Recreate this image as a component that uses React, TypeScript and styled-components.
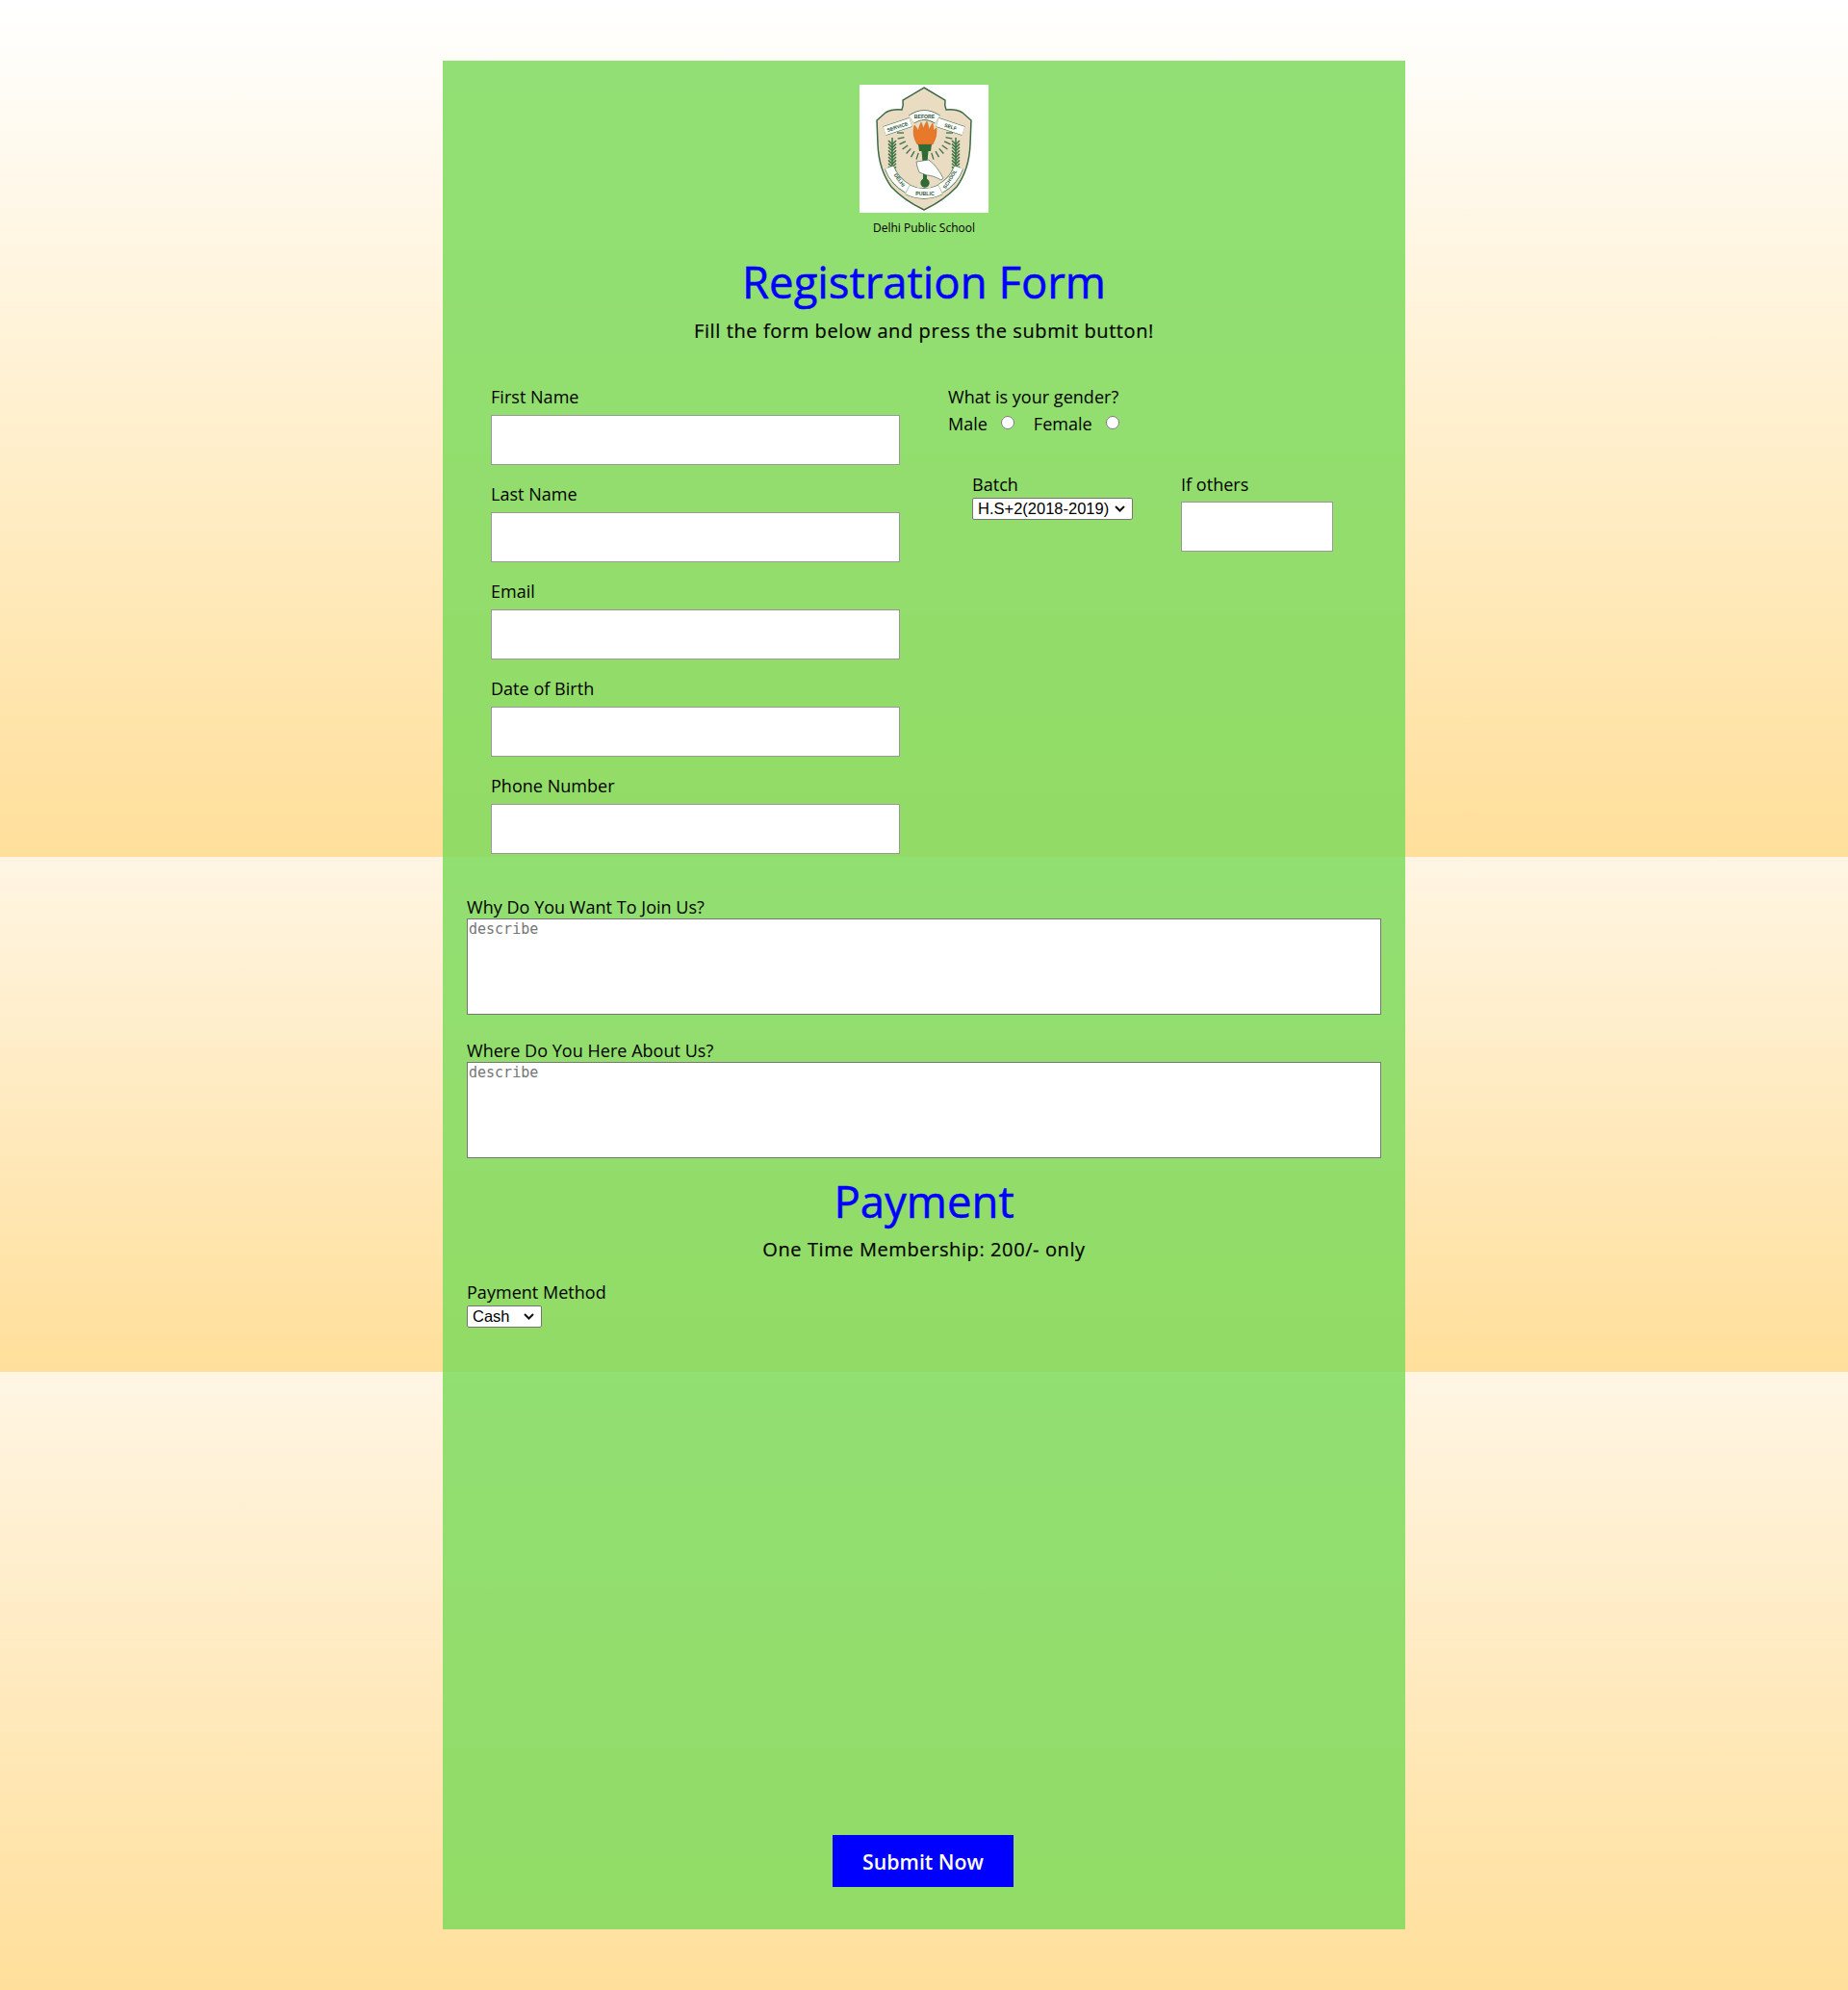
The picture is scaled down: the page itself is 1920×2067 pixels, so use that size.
import React from 'react';
import styled, { createGlobalStyle } from 'styled-components';

const GlobalStyle = createGlobalStyle`
  html, body {
    margin: 0;
    padding: 0;
  }

  body {
    color: #000;
    font-family: 'Open Sans', 'Liberation Sans', sans-serif;
  }

  * {
    box-sizing: border-box;
  }
`;

const Band = styled.section<{ $top?: number; $bottom?: number; $from: string }>`
  background: linear-gradient(to bottom, ${(props) => props.$from} 0%, #ffdf9a 100%);
  padding: ${(props) => props.$top || 0}px 0 ${(props) => props.$bottom || 0}px;
`;

const CardSlice = styled.div<{ $height: number }>`
  background-color: rgba(125, 218, 92, 0.84);
  height: ${(props) => props.$height}px;
  margin: 0 auto;
  width: 1000px;
`;

const Header = styled.header`
  align-items: center;
  display: flex;
  flex-direction: column;
  padding-top: 25px;
`;

const LogoBox = styled.svg`
  display: block;
  height: 133px;
  width: 134px;
`;

const Caption = styled.div`
  font-size: 12px;
  line-height: 16px;
  margin-top: 8px;
`;

const Title = styled.h1<{ $top: number }>`
  color: #0000ff;
  font-size: 45.5px;
  font-weight: 500;
  line-height: 54px;
  margin: ${(props) => props.$top}px 0 0;
  padding-bottom: 1px;
  text-align: center;
  -webkit-text-stroke: 0.5px #0000ff;
`;

const Subtitle = styled.p<{ $top: number }>`
  font-size: 20px;
  font-weight: 500;
  letter-spacing: 0.6px;
  line-height: 28px;
  margin: ${(props) => props.$top}px 0 0;
  text-align: center;
  -webkit-text-stroke: 0.2px #000;
`;

const Columns = styled.div`
  column-gap: 50px;
  display: grid;
  grid-template-columns: 425px 1fr;
  margin-top: 42px;
  padding-left: 50px;
`;

const Label = styled.label`
  display: block;
  font-size: 18px;
  letter-spacing: 0.03px;
  line-height: 24px;
`;

const Field = styled.div`
  margin-bottom: 18px;
`;

const TextInput = styled.input`
  background: #fff;
  border: 1px solid #999;
  display: block;
  height: 52px;
  margin-top: 7px;
  width: 100%;
`;

const RadioRow = styled.div`
  align-items: center;
  display: flex;
  font-size: 18px;
  line-height: 24px;
  margin-top: 4px;
`;

const RadioOption = styled.label`
  align-items: center;
  display: flex;
  margin-right: 20px;
`;

const Radio = styled.input`
  height: 14px;
  margin: 0 0 2px 14px;
  width: 14px;
`;

const BatchRow = styled.div`
  display: grid;
  grid-template-columns: 217px 158px;
  margin-top: 39px;
  padding-left: 25px;
`;

const CHEVRON =
  "url(\"data:image/svg+xml,%3Csvg xmlns='http://www.w3.org/2000/svg' width='11' height='7'%3E%3Cpath d='M1 1l4.5 4.5L10 1' fill='none' stroke='%23111' stroke-width='2'/%3E%3C/svg%3E\")";

const Select = styled.select<{ $width: number }>`
  appearance: none;
  background: #fff ${CHEVRON} no-repeat right 7px center;
  border: 1px solid #767676;
  border-radius: 2px;
  color: #000;
  display: block;
  font-family: 'Liberation Sans', sans-serif;
  font-size: 16.5px;
  height: 23px;
  line-height: 21px;
  margin-top: 2px;
  padding: 0 0 0 5px;
  width: ${(props) => props.$width}px;
`;

const OthersInput = styled(TextInput)`
  margin-top: 6px;
`;

const Questions = styled.div`
  padding: 40px 25px 0;
`;

const Question = styled.div<{ $top: number }>`
  margin-top: ${(props) => props.$top}px;
`;

const Describe = styled.textarea`
  background: #fff;
  border: 1px solid #767676;
  display: block;
  font-family: 'DejaVu Sans Mono', monospace;
  font-size: 15px;
  height: 100px;
  padding: 1px;
  resize: none;
  width: 100%;

  &::placeholder {
    color: #757575;
  }
`;

const SubmitRow = styled.div`
  display: flex;
  justify-content: center;
  padding-top: 481px;
`;

const SubmitButton = styled.button`
  background: #0000ff;
  border: none;
  color: #fff;
  font-family: inherit;
  font-size: 21.3px;
  font-weight: 600;
  height: 54px;
  margin-right: 2px;
  padding: 1px 0 0;
  width: 188px;
`;

const SHIELD =
  'M67 3 L89 16 Q88 21 90 26 Q100 25 107 29 L116 37 L115 62 Q114 88 101 106 Q88 120 67 130 Q46 120 33 106 Q20 88 19 62 L18 37 L27 29 Q34 25 44 26 Q46 21 45 16 Z';

const rayAngles = [-12, 0, 12, 24, 36, 48, 60, 72, 108, 120, 132, 144, 156, 168, 180, 192];
const wheatLeaves = [0, 1, 2, 3, 4, 5, 6, 7, 8, 9];

const Wheat: React.FC<{ x: number }> = ({ x }) => (
  <g stroke='#3b7344' strokeWidth='1.5' fill='none'>
    <path d={`M${x} 55 V94`} />
    {wheatLeaves.map((leaf) => (
      <path
        key={leaf}
        d={`M${x - 4} ${58 + leaf * 3.4} L${x} ${62 + leaf * 3.4} L${x + 4} ${58 + leaf * 3.4}`}
      />
    ))}
  </g>
);

const Banner: React.FC<{ d: string; width?: number }> = ({ d, width = 9 }) => (
  <g fill='none'>
    <path d={d} stroke='#3d6b45' strokeWidth={width + 1.2} />
    <path d={d} stroke='#fff' strokeWidth={width} />
  </g>
);

const Logo: React.FC = () => (
  <LogoBox viewBox='0 0 134 133' role='img' aria-label='Delhi Public School crest'>
    <rect width='134' height='133' fill='#fff' />
    <path d={SHIELD} fill='#e9dcc2' stroke='#3d6b45' strokeWidth='1.5' />

    <g stroke='#3f6f49' strokeWidth='1.3'>
      {rayAngles.map((angle) => {
        const rad = (angle * Math.PI) / 180;
        return (
          <line
            key={angle}
            x1={68 + Math.cos(rad) * 22}
            y1={50 + Math.sin(rad) * 22}
            x2={68 + Math.cos(rad) * 29}
            y2={50 + Math.sin(rad) * 29}
          />
        );
      })}
    </g>

    <Wheat x={34} />
    <Wheat x={100} />

    <Banner d='M26 48 L53 39' />
    <Banner d='M108 48 L81 39' />
    <Banner d='M54 36 Q67 27 81 36' />
    <Banner d='M31 86 Q36 100 50 108' />
    <Banner d='M103 86 Q98 100 84 108' />
    <Banner d='M50 109 Q67 117 84 109' width={10} />

    <g
      fill='#2a5331'
      fontFamily="'Liberation Sans', sans-serif"
      fontSize='5.2'
      fontWeight='700'
      textAnchor='middle'
    >
      <text transform='translate(40 45.5) rotate(-18)'>SERVICE</text>
      <text transform='translate(67.5 34.5)'>BEFORE</text>
      <text transform='translate(94 45.5) rotate(18)'>SELF</text>
      <text transform='translate(40 100) rotate(55)'>DELHI</text>
      <text transform='translate(68 115)'>PUBLIC</text>
      <text transform='translate(95.5 99) rotate(-58)'>SCHOOL</text>
    </g>

    <path
      d='M60 62 Q54 52 57 42 Q60 45 61 48 Q62 43 64 39 Q66 43 66 46 Q68 41 70 38 Q72 43 72 47 Q74 43 76 40 Q77 44 77 48 Q78 46 80 45 Q81 54 76 62 Z'
      fill='#e8792b'
      stroke='#c85f14'
      strokeWidth='0.5'
    />
    <path d='M61 62 H75 L74 69 H62 Z' fill='#2f6b35' />
    <path d='M64.5 69 H71.5 L70.5 80 H65.5 Z' fill='#2f6b35' />
    <rect x='66' y='90' width='4' height='10' fill='#2f6b35' />
    <circle cx='68' cy='102' r='4.7' fill='#2f6b35' />
    <path
      d='M59 80 L72 78 Q80 84 87 97 L85 99 Q76 94 70 94 L62 91 L60 85 Z'
      fill='#fff'
      stroke='#4d6b50'
      strokeWidth='0.7'
    />
  </LogoBox>
);

export default function App() {
  return (
    <>
      <GlobalStyle />
      <Band $top={63} $from='#ffffff'>
        <CardSlice $height={827}>
          <Header>
            <Logo />
            <Caption>Delhi Public School</Caption>
          </Header>
          <Title $top={20}>Registration Form</Title>
          <Subtitle $top={10}>Fill the form below and press the submit button!</Subtitle>

          <Columns>
            <div>
              {['First Name', 'Last Name', 'Email', 'Date of Birth', 'Phone Number'].map((name) => (
                <Field key={name}>
                  <Label>{name}</Label>
                  <TextInput type='text' />
                </Field>
              ))}
            </div>
            <div>
              <Label>What is your gender?</Label>
              <RadioRow>
                <RadioOption>
                  Male
                  <Radio type='radio' name='gender' />
                </RadioOption>
                <RadioOption>
                  Female
                  <Radio type='radio' name='gender' />
                </RadioOption>
              </RadioRow>
              <BatchRow>
                <div>
                  <Label>Batch</Label>
                  <Select $width={167}>
                    <option>H.S+2(2018-2019)</option>
                  </Select>
                </div>
                <div>
                  <Label>If others</Label>
                  <OthersInput type='text' />
                </div>
              </BatchRow>
            </div>
          </Columns>
        </CardSlice>
      </Band>

      <Band $from='#fff5e3'>
        <CardSlice $height={535}>
          <Questions>
            <Question $top={0}>
              <Label>Why Do You Want To Join Us?</Label>
              <Describe placeholder='describe' />
            </Question>
            <Question $top={25}>
              <Label>Where Do You Here About Us?</Label>
              <Describe placeholder='describe' />
            </Question>
            <Title $top={17}>Payment</Title>
            <Subtitle $top={9}>One Time Membership: 200/- only</Subtitle>
            <Question $top={18}>
              <Label>Payment Method</Label>
              <Select $width={78}>
                <option>Cash</option>
              </Select>
            </Question>
          </Questions>
        </CardSlice>
      </Band>

      <Band $bottom={63} $from='#fff5e3'>
        <CardSlice $height={579}>
          <SubmitRow>
            <SubmitButton type='button'>Submit Now</SubmitButton>
          </SubmitRow>
        </CardSlice>
      </Band>
    </>
  );
}
